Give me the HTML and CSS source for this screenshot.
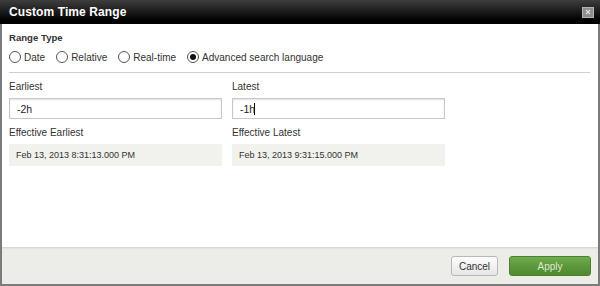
FILE: index.html
```html
<!DOCTYPE html>
<html>
<head>
<meta charset="utf-8">
<link rel="stylesheet" href="styles.css">
</head>
<body>
<div class="dialog">
  <div class="titlebar">
    <span class="title">Custom Time Range</span>
    <span class="close"><svg width="6" height="6" viewBox="0 0 6 6"><path d="M1 1L5 5M5 1L1 5" stroke="#e2e2e2" stroke-width="1.1"/></svg></span>
  </div>
  <div class="body">
    <div class="section-label">Range Type</div>
    <div class="radios">
      <label class="radio"><span class="circle"></span>Date</label>
      <label class="radio"><span class="circle"></span>Relative</label>
      <label class="radio"><span class="circle"></span>Real-time</label>
      <label class="radio"><span class="circle checked"></span>Advanced search language</label>
    </div>
    <div class="separator"></div>
    <div class="fields">
      <div class="col">
        <div class="label">Earliest</div>
        <div class="input">-2h</div>
        <div class="label eff">Effective Earliest</div>
        <div class="readout">Feb 13, 2013 8:31:13.000 PM</div>
      </div>
      <div class="col">
        <div class="label">Latest</div>
        <div class="input">-1h<span class="caret"></span></div>
        <div class="label eff">Effective Latest</div>
        <div class="readout">Feb 13, 2013 9:31:15.000 PM</div>
      </div>
    </div>
  </div>
  <div class="footer">
    <button class="btn cancel">Cancel</button>
    <button class="btn apply">Apply</button>
  </div>
</div>
</body>
</html>
```
FILE: styles.css
```css
html, body {
  margin: 0;
  padding: 0;
}
body {
  width: 600px;
  height: 286px;
  font-family: "Liberation Sans", Arial, sans-serif;
  color: #333;
}
.dialog {
  box-sizing: border-box;
  width: 600px;
  height: 286px;
  display: flex;
  flex-direction: column;
  background: #fff;
  border: 2px solid #7b7b7b;
  border-top: 0;
}
.titlebar {
  height: 24px;
  flex: none;
  margin: 0 -2px;
  background: linear-gradient(#3e3e3e, #000 85%);
  display: flex;
  align-items: center;
  justify-content: space-between;
  padding: 0 6px 0 9px;
}
.title {
  color: #fff;
  font-weight: bold;
  font-size: 12px;
  letter-spacing: 0.1px;
}
.close {
  box-sizing: border-box;
  width: 12px;
  height: 11px;
  background: #8e8e8e;
  border: 1px solid #b4b4b4;
  display: flex;
  align-items: center;
  justify-content: center;
}
.body {
  flex: 1;
  padding: 8px 8px 0 7px;
}
.section-label {
  font-size: 9.6px;
  font-weight: bold;
  color: #333;
  height: 12px;
  line-height: 12px;
}
.radios {
  display: flex;
  margin-top: 7px;
  height: 12px;
  align-items: center;
}
.radio {
  display: flex;
  align-items: center;
  font-size: 10px;
  color: #333;
  margin-right: 11px;
}
.circle {
  box-sizing: border-box;
  width: 12px;
  height: 12px;
  border-radius: 50%;
  border: 1px solid #555;
  background: #fff;
  margin-right: 3px;
  display: flex;
  align-items: center;
  justify-content: center;
}
.circle.checked::after {
  content: "";
  width: 6px;
  height: 6px;
  border-radius: 50%;
  background: #111;
}
.separator {
  height: 1px;
  background: #d0d0d0;
  margin: 9px 0 0 0;
}
.fields {
  display: flex;
  gap: 10px;
  margin-top: 8px;
}
.col {
  width: 213px;
  display: flex;
  flex-direction: column;
}
.label {
  font-size: 10px;
  color: #333;
  height: 12px;
  line-height: 12px;
}
.input {
  box-sizing: border-box;
  margin-top: 5px;
  height: 21px;
  border: 1px solid #c8c8c8;
  box-shadow: inset 0 1px 2px rgba(0,0,0,0.12);
  font-size: 10.5px;
  padding-left: 7px;
  color: #222;
  display: flex;
  align-items: center;
}
.caret {
  width: 1px;
  height: 12px;
  background: #000;
  margin-left: -1px;
}
.eff {
  margin-top: 8px;
}
.readout {
  margin-top: 5px;
  height: 22px;
  background: #f1f1ed;
  font-size: 9px;
  color: #333;
  line-height: 22px;
  padding-left: 7px;
}
.footer {
  height: 37px;
  flex: none;
  box-sizing: border-box;
  background: #ecece8;
  border-top: 1px solid #d8d8d4;
  box-shadow: inset 0 1px 1px rgba(0,0,0,0.04);
  display: flex;
  justify-content: flex-end;
  align-items: center;
  padding: 0 7px 0 0;
  gap: 11px;
}
.btn {
  font-family: "Liberation Sans", Arial, sans-serif;
  font-size: 10px;
  height: 20px;
  border-radius: 3px;
  padding: 0;
  cursor: default;
}
.cancel {
  width: 47px;
  background: linear-gradient(#fdfdfd, #e6e6e6);
  border: 1px solid #b8b8b8;
  color: #333;
}
.apply {
  width: 82px;
  background: linear-gradient(#70ad4d, #5b963b 55%, #4f8a33);
  border: 1px solid #4c8030;
  color: #dcebd0;
}
```
